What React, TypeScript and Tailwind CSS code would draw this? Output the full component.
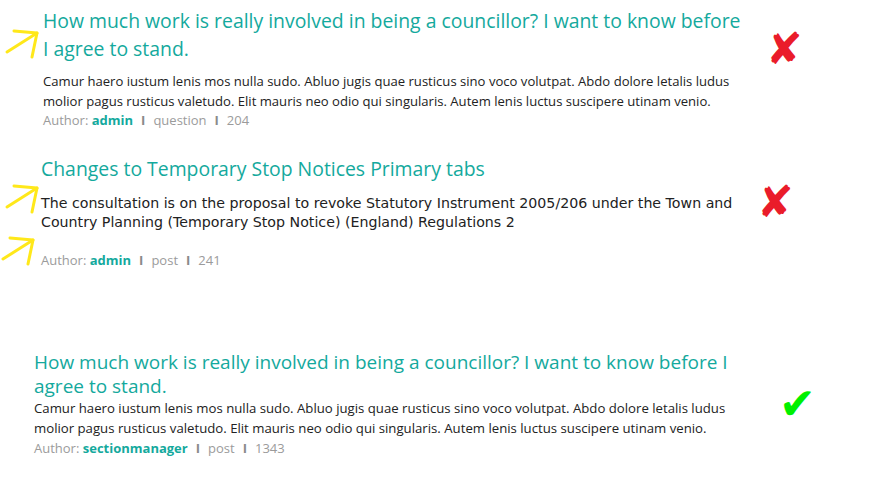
import React from 'react';

const teal = 'text-[#14a99d]';

function Arrow({ className }: { className: string }) {
  return (
    <svg className={`absolute ${className}`} width="40" height="34" viewBox="0 0 40 34" fill="none">
      <path d="M3 24 L33 5" stroke="#ffe81a" strokeWidth="3" strokeLinecap="round" />
      <path d="M10 3 L33 5 L28 29" stroke="#ffe81a" strokeWidth="3" strokeLinecap="round" strokeLinejoin="round" />
    </svg>
  );
}

function Meta({ author, kind, count }: { author: string; kind: string; count: string }) {
  return (
    <p className="text-[13px] text-[#9b9b9b] leading-5">
      Author: <span className={`font-bold ${teal}`}>{author}</span>
      <span className="mx-2 font-bold text-[#8a8a8a]">I</span>
      {kind}
      <span className="mx-2 font-bold text-[#8a8a8a]">I</span>
      {count}
    </p>
  );
}

export default function App() {
  return (
    <div className="w-[890px] h-[485px] bg-white overflow-hidden font-['Open_Sans',sans-serif]">
      {/* first attempt */}
      <section className="relative flex pt-[7px] pl-[43px]">
        <Arrow className="left-[4px] top-[28px]" />
        <div className="w-[715px]">
          <h2 className={`text-[19.4px] leading-[28px] ${teal}`}>
            How much work is really involved in being a councillor? I want to know before
            <br />I agree to stand.
          </h2>
          <p className="mt-[8px] text-[13.1px] leading-5 text-[#222]">
            Camur haero iustum lenis mos nulla sudo. Abluo jugis quae rusticus sino voco volutpat. Abdo dolore letalis ludus
            <br />
            molior pagus rusticus valetudo. Elit mauris neo odio qui singularis. Autem lenis luctus suscipere utinam venio.
          </p>
          <div className="-mt-[1px]">
            <Meta author="admin" kind="question" count="204" />
          </div>
        </div>
        <span className="ml-[8px] mt-[19px] text-[44px] leading-[46px] text-[#ea1c2a] font-['DejaVu_Sans',sans-serif]">✘</span>
      </section>

      {/* second attempt */}
      <section className="relative flex pt-[25px] pl-[41px]">
        <Arrow className="left-[4px] top-[53px]" />
        <Arrow className="left-[0px] top-[105px]" />
        <div className="w-[720px]">
          <h2 className={`text-[19.4px] leading-[28px] ${teal}`}>Changes to Temporary Stop Notices Primary tabs</h2>
          <p className="mt-[11px] text-[14.2px] leading-[19px] text-[#222] font-['DejaVu_Sans',sans-serif]">
            The consultation is on the proposal to revoke Statutory Instrument 2005/206 under the Town and
            <br />
            Country Planning (Temporary Stop Notice) (England) Regulations 2
          </p>
          <div className="mt-[18px]">
            <Meta author="admin" kind="post" count="241" />
          </div>
        </div>
        <span className="-ml-[4px] mt-[25px] text-[44px] leading-[44px] text-[#ea1c2a] font-['DejaVu_Sans',sans-serif]">✘</span>
      </section>

      {/* accepted version */}
      <section className="flex pt-[80px] pl-[34px]">
        <div className="w-[730px]">
          <h2 className={`text-[19px] leading-6 ${teal}`}>
            How much work is really involved in being a councillor? I want to know before I
            <br />
            agree to stand.
          </h2>
          <p className="text-[13.2px] leading-5 text-[#222]">
            Camur haero iustum lenis mos nulla sudo. Abluo jugis quae rusticus sino voco volutpat. Abdo dolore letalis ludus
            <br />
            molior pagus rusticus valetudo. Elit mauris neo odio qui singularis. Autem lenis luctus suscipere utinam venio.
          </p>
          <Meta author="sectionmanager" kind="post" count="1343" />
        </div>
        <span className="ml-[15px] mt-[32px] text-[44px] leading-[44px] text-[#00f000] font-['DejaVu_Sans',sans-serif]">✔</span>
      </section>
    </div>
  );
}
